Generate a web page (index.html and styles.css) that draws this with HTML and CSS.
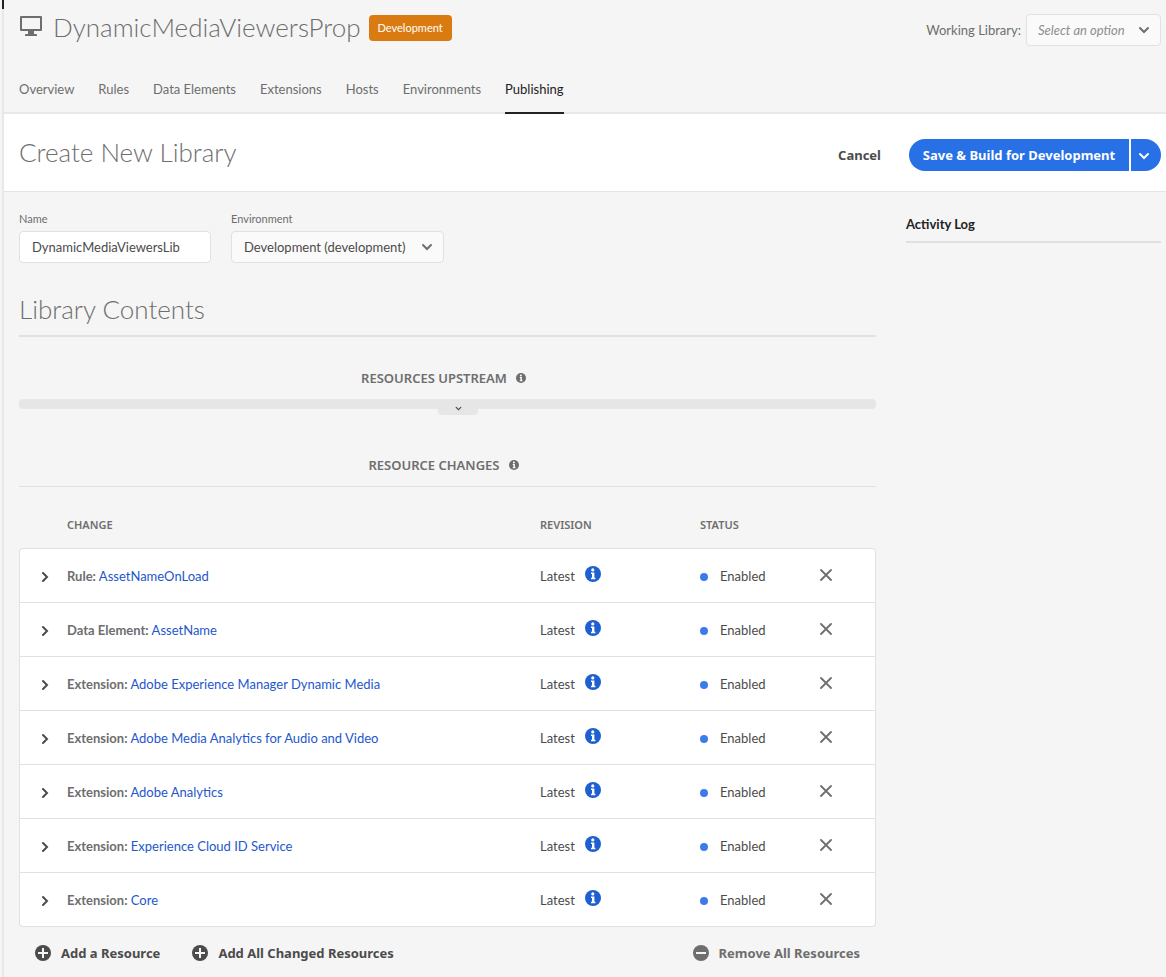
FILE: index.html
```html
<!DOCTYPE html>
<html lang="en">
<head>
<meta charset="utf-8">
<title>Create New Library</title>
<link rel="stylesheet" href="styles.css">
</head>
<body>
<svg class="defs" aria-hidden="true">
  <symbol id="chevron" viewBox="0 0 12 8"><path d="M2 2l4 4 4-4" fill="none" stroke="currentColor" stroke-width="2" stroke-linecap="round"/></symbol>
  <symbol id="chevron-right" viewBox="0 0 8 12"><path d="M2 2l4 4-4 4" fill="none" stroke="currentColor" stroke-width="2" stroke-linecap="round"/></symbol>
  <symbol id="info" viewBox="0 0 16 16"><circle cx="8" cy="8" r="8" fill="currentColor"/><circle cx="7.8" cy="3.9" r="1.6" fill="#fff"/><path d="M6 6.5h3.4v5.2h1v1.5H6v-1.5h1V8H6z" fill="#fff"/></symbol>
  <symbol id="cross" viewBox="0 0 12 12"><path d="M1 1l10 10M11 1L1 11" fill="none" stroke="currentColor" stroke-width="1.8" stroke-linecap="round"/></symbol>
  <symbol id="plus" viewBox="0 0 16 16"><circle cx="8" cy="8" r="8" fill="currentColor"/><path d="M8 3v10M3 8h10" stroke="#f5f5f5" stroke-width="2"/></symbol>
  <symbol id="minus" viewBox="0 0 16 16"><circle cx="8" cy="8" r="8" fill="currentColor"/><path d="M3 8h10" stroke="#f5f5f5" stroke-width="2"/></symbol>
</svg>
<div class="app">
  <header class="header">
    <div class="property">
      <svg class="monitor" viewBox="0 0 22 20" aria-hidden="true"><path fill="currentColor" fill-rule="evenodd" d="M1 0h20a1 1 0 0 1 1 1v13a1 1 0 0 1-1 1h-7v3h2a1 1 0 0 1 1 1v1H5v-1a1 1 0 0 1 1-1h2v-3H1a1 1 0 0 1-1-1V1a1 1 0 0 1 1-1zm1 2v11h18V2z"/></svg>
      <h1 class="title">DynamicMediaViewersProp</h1>
      <span class="badge">Development</span>
      <div class="working">
        <label for="working">Working Library:</label>
        <span class="picker picker-working"><select id="working"><option>Select an option</option></select><svg class="picker-icon" aria-hidden="true"><use href="#chevron"/></svg></span>
      </div>
    </div>
    <nav class="tabs">
      <a class="tab" href="#">Overview</a>
      <a class="tab" href="#">Rules</a>
      <a class="tab" href="#">Data Elements</a>
      <a class="tab" href="#">Extensions</a>
      <a class="tab" href="#">Hosts</a>
      <a class="tab" href="#">Environments</a>
      <a class="tab active" href="#" aria-current="page">Publishing</a>
    </nav>
  </header>
  <div class="actionbar">
    <h2 class="title">Create New Library</h2>
    <div class="actions">
      <button class="cancel">Cancel</button>
      <div class="split">
        <button class="save">Save &amp; Build for Development</button>
        <button class="more" aria-label="More save options"><svg aria-hidden="true"><use href="#chevron"/></svg></button>
      </div>
    </div>
  </div>
  <div class="content">
    <main class="main">
      <form class="fields">
        <div class="field field-name"><label for="name">Name</label><input id="name" type="text" value="DynamicMediaViewersLib"></div>
        <div class="field"><label for="env">Environment</label><span class="picker picker-env"><select id="env"><option>Development (development)</option></select><svg class="picker-icon" aria-hidden="true"><use href="#chevron"/></svg></span></div>
      </form>
      <h2 class="title contents-title">Library Contents</h2>
      <h3 class="section">Resources Upstream <svg aria-hidden="true"><use href="#info"/></svg></h3>
      <div class="upstream"><button class="expand" aria-label="Show upstream resources"><svg aria-hidden="true"><use href="#chevron"/></svg></button></div>
      <h3 class="section changes">Resource Changes <svg aria-hidden="true"><use href="#info"/></svg></h3>
      <table class="resources">
        <colgroup><col class="col-toggle"><col><col class="col-revision"><col class="col-status"><col class="col-remove"></colgroup>
        <thead><tr><th></th><th>Change</th><th>Revision</th><th>Status</th><th></th></tr></thead>
        <tbody>
          <tr><td><button class="icon toggle" aria-label="Expand"><svg aria-hidden="true"><use href="#chevron-right"/></svg></button></td><td><b>Rule:</b> <a href="#">AssetNameOnLoad</a></td><td>Latest <svg class="info" aria-hidden="true"><use href="#info"/></svg></td><td><span class="dot"></span>Enabled</td><td><button class="icon remove" aria-label="Remove"><svg aria-hidden="true"><use href="#cross"/></svg></button></td></tr>
          <tr><td><button class="icon toggle" aria-label="Expand"><svg aria-hidden="true"><use href="#chevron-right"/></svg></button></td><td><b>Data Element:</b> <a href="#">AssetName</a></td><td>Latest <svg class="info" aria-hidden="true"><use href="#info"/></svg></td><td><span class="dot"></span>Enabled</td><td><button class="icon remove" aria-label="Remove"><svg aria-hidden="true"><use href="#cross"/></svg></button></td></tr>
          <tr><td><button class="icon toggle" aria-label="Expand"><svg aria-hidden="true"><use href="#chevron-right"/></svg></button></td><td><b>Extension:</b> <a href="#">Adobe Experience Manager Dynamic Media</a></td><td>Latest <svg class="info" aria-hidden="true"><use href="#info"/></svg></td><td><span class="dot"></span>Enabled</td><td><button class="icon remove" aria-label="Remove"><svg aria-hidden="true"><use href="#cross"/></svg></button></td></tr>
          <tr><td><button class="icon toggle" aria-label="Expand"><svg aria-hidden="true"><use href="#chevron-right"/></svg></button></td><td><b>Extension:</b> <a href="#">Adobe Media Analytics for Audio and Video</a></td><td>Latest <svg class="info" aria-hidden="true"><use href="#info"/></svg></td><td><span class="dot"></span>Enabled</td><td><button class="icon remove" aria-label="Remove"><svg aria-hidden="true"><use href="#cross"/></svg></button></td></tr>
          <tr><td><button class="icon toggle" aria-label="Expand"><svg aria-hidden="true"><use href="#chevron-right"/></svg></button></td><td><b>Extension:</b> <a href="#">Adobe Analytics</a></td><td>Latest <svg class="info" aria-hidden="true"><use href="#info"/></svg></td><td><span class="dot"></span>Enabled</td><td><button class="icon remove" aria-label="Remove"><svg aria-hidden="true"><use href="#cross"/></svg></button></td></tr>
          <tr><td><button class="icon toggle" aria-label="Expand"><svg aria-hidden="true"><use href="#chevron-right"/></svg></button></td><td><b>Extension:</b> <a href="#">Experience Cloud ID Service</a></td><td>Latest <svg class="info" aria-hidden="true"><use href="#info"/></svg></td><td><span class="dot"></span>Enabled</td><td><button class="icon remove" aria-label="Remove"><svg aria-hidden="true"><use href="#cross"/></svg></button></td></tr>
          <tr><td><button class="icon toggle" aria-label="Expand"><svg aria-hidden="true"><use href="#chevron-right"/></svg></button></td><td><b>Extension:</b> <a href="#">Core</a></td><td>Latest <svg class="info" aria-hidden="true"><use href="#info"/></svg></td><td><span class="dot"></span>Enabled</td><td><button class="icon remove" aria-label="Remove"><svg aria-hidden="true"><use href="#cross"/></svg></button></td></tr>
        </tbody>
      </table>
      <div class="footer">
        <button class="quiet"><svg aria-hidden="true"><use href="#plus"/></svg>Add a Resource</button>
        <button class="quiet"><svg aria-hidden="true"><use href="#plus"/></svg>Add All Changed Resources</button>
        <button class="quiet remove-all"><svg aria-hidden="true"><use href="#minus"/></svg>Remove All Resources</button>
      </div>
    </main>
    <aside><h3 class="log-title">Activity Log</h3></aside>
  </div>
</div>
</body>
</html>
```
FILE: styles.css
```css
* { box-sizing: border-box; }
body { margin: 0; background: #f5f5f5; color: #4b4b4b; font: 13px/20px Lato, "Open Sans", sans-serif; }
h1, h2, h3 { margin: 0; }
svg { display: block; flex: none; }
button, input, select { font: inherit; color: inherit; margin: 0; }
button { border: 0; padding: 0; background: none; white-space: nowrap; cursor: pointer; }
a { color: #2457cc; text-decoration: none; }
.defs { position: absolute; width: 0; height: 0; }

.app { position: relative; min-height: 100vh; margin-left: 2px; border-left: 2px solid #e8e8e8; }
.app::before { content: ""; position: absolute; left: -2px; top: 0; width: 2px; height: 9px; background: #222; }
.title { font-size: 26px; line-height: 36px; font-weight: 300; color: #6e6e6e; white-space: nowrap; }

.header { display: flex; flex-direction: column; padding: 10px 5px 0 15px; border-bottom: 2px solid #e8e8e8; }
.property { display: flex; align-items: center; height: 36px; }
.property .title { padding-bottom: 2px; }
.monitor { width: 22px; height: 20px; margin: 0 11px 4px 1px; color: #6e6e6e; }
.badge { height: 26px; margin-left: 8px; padding: 0 9px; border-radius: 4px; background: #da7b11; color: #fff; font-size: 11px; line-height: 26px; }
.working { display: flex; align-items: center; gap: 5px; margin-left: auto; padding-top: 4px; color: #6e6e6e; }

.picker { position: relative; display: block; }
.picker select, .field input { display: block; width: 100%; height: 32px; padding: 0 12px; border: 1px solid #e1e1e1; border-radius: 4px; outline: 0; }
.picker select { appearance: none; padding-right: 28px; background: #fafafa; }
.picker-icon { position: absolute; right: 11px; top: 12px; width: 12px; height: 8px; color: #6e6e6e; pointer-events: none; }
.picker-working { width: 135px; }
.picker-working select { padding-left: 11px; font-style: italic; color: #8e8e8e; }
.picker-env { width: 213px; }

.tabs { display: flex; gap: 24px; height: 68px; margin-bottom: -2px; padding-top: 30px; }
.tab { padding-top: 3px; color: #6e6e6e; white-space: nowrap; }
.tab.active { border-bottom: 2px solid #222; color: #222; }

.actionbar { display: flex; align-items: center; justify-content: space-between; height: 78px; padding: 4px 5px 0 15px; background: #fff; border-bottom: 1px solid #e4e4e4; }
.actionbar .title { padding-bottom: 5px; }
.actions, .split { display: flex; }
.actions { gap: 28px; }
.cancel, .save, .quiet { font-family: "Noto Sans", sans-serif; font-weight: 700; }
.split { gap: 2px; }
.save, .more { height: 32px; background: #2770e6; color: #fff; }
.save { width: 220px; border-radius: 16px 0 0 16px; }
.more { width: 30px; padding: 2px 0 0 7px; border-radius: 0 16px 16px 0; }
.more svg { width: 12px; height: 8px; }

.content { display: grid; grid-template-columns: minmax(0, 1fr) 255px; gap: 30px; padding: 17px 5px 12px 15px; }
.fields { display: flex; gap: 20px; }
.field { display: flex; flex-direction: column; gap: 2px; font-size: 13px; }
.field label { font-size: 11px; color: #6e6e6e; }
.field-name { width: 192px; }
.field input { background: #fff; }
.contents-title { margin-top: 28px; padding-bottom: 8px; border-bottom: 2px solid #e1e1e1; }

.section { display: flex; align-items: center; justify-content: center; gap: 9px; margin-top: 31px; padding-right: 8px; font-family: "Noto Sans", sans-serif; font-size: 13px; line-height: 20px; font-weight: 600; text-transform: uppercase; color: #6e6e6e; }
.section svg { width: 10px; height: 10px; }
.upstream { display: flex; justify-content: center; height: 10px; margin-top: 11px; padding-left: 21px; border-radius: 4px; background: #e6e6e6; }
.expand { display: flex; justify-content: center; width: 40px; height: 16px; padding-top: 7px; border-radius: 0 0 4px 4px; background: #e6e6e6; }
.expand svg { width: 7px; height: 5px; }
.section.changes { margin-top: 46px; }

.resources { width: 100%; margin-top: 11px; border-top: 1px solid #e1e1e1; border-spacing: 0; table-layout: fixed; }
.col-toggle { width: 48px; }
.col-revision { width: 160px; }
.col-status { width: 120px; }
.col-remove { width: 56px; }
.resources th { height: 61px; padding: 15px 0 0; text-align: left; font-family: "Noto Sans", sans-serif; font-size: 11px; font-weight: 600; line-height: 14px; text-transform: uppercase; color: #6e6e6e; }
.resources td { height: 54px; padding: 0; background: #fff; border-bottom: 1px solid #e1e1e1; white-space: nowrap; }
.resources b { color: #6e6e6e; font-weight: 700; }
.resources tr:first-child td { height: 55px; border-top: 1px solid #e1e1e1; }
.resources td:first-child { border-left: 1px solid #e1e1e1; }
.resources td:last-child { border-right: 1px solid #e1e1e1; }
.resources tr:first-child td:first-child { border-top-left-radius: 4px; }
.resources tr:first-child td:last-child { border-top-right-radius: 4px; }
.resources tr:last-child td:first-child { border-bottom-left-radius: 4px; }
.resources tr:last-child td:last-child { border-bottom-right-radius: 4px; }
.icon { display: block; }
.toggle { padding-top: 2px; margin-left: 21px; }
.toggle svg { width: 8px; height: 12px; }
.remove { margin: 0 0 1px; color: #6e6e6e; }
.remove svg { width: 12px; height: 12px; }
.info { display: inline-block; width: 16px; height: 16px; margin-left: 7px; vertical-align: -1px; color: #1f60d1; }
.dot { display: inline-block; width: 8px; height: 8px; margin-right: 12px; border-radius: 50%; background: #3b7bea; }

.footer { display: flex; gap: 32px; padding: 16px 16px 0; }
.quiet { display: flex; align-items: center; gap: 10px; }
.quiet svg { width: 16px; height: 16px; }
.remove-all { margin-left: auto; color: #6e6e6e; }
.log-title { padding: 5px 0 7px; border-bottom: 2px solid #e1e1e1; color: #222; font-size: 13px; line-height: 20px; font-weight: 700; }
```
